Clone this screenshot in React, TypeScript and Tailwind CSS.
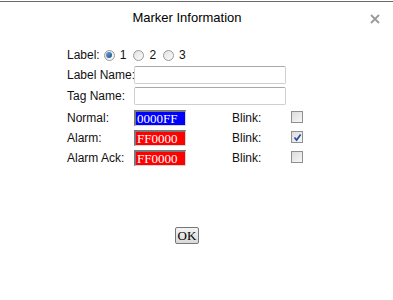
const sans = { fontFamily: '"Liberation Sans", Arial, sans-serif' }

function Radio({ checked }: { checked?: boolean }) {
  return (
    <span className="flex h-[11px] w-[11px] shrink-0 items-center justify-center rounded-full border border-[#9a9a9a] bg-gradient-to-br from-[#e2e2e2] to-[#fbfbfb]">
      {checked && (
        <span className="h-[6px] w-[6px] rounded-full bg-gradient-to-br from-[#6fa8da] to-[#174f8c]" />
      )}
    </span>
  )
}

function Checkbox({ checked }: { checked?: boolean }) {
  return (
    <span className="flex h-[12px] w-[12px] items-center justify-center border border-[#8e8f8f] bg-gradient-to-br from-[#dcdcdc] to-[#f7f7f7]">
      {checked && (
        <svg width="9" height="9" viewBox="0 0 9 9">
          <path d="M1.5 4.5 L3.6 7 L7.6 1.5" fill="none" stroke="#2a4d9a" strokeWidth="1.7" />
        </svg>
      )}
    </span>
  )
}

function ColorBox({ value, bg }: { value: string; bg: string }) {
  return (
    <div
      className={`flex h-[16px] w-[52px] items-center border-l-2 border-t-2 border-r border-b border-l-[#7a7a7a] border-t-[#7a7a7a] border-r-[#d8d8d8] border-b-[#d8d8d8] pl-px text-[13px] leading-none text-white ${bg}`}
      style={{ fontFamily: '"Liberation Serif", "Times New Roman", serif' }}
    >
      {value}
    </div>
  )
}

const colorRows = [
  { label: 'Normal:', value: '0000FF', bg: 'bg-[#0000ff]', blink: false },
  { label: 'Alarm:', value: 'FF0000', bg: 'bg-[#ff0000]', blink: true },
  { label: 'Alarm Ack:', value: 'FF0000', bg: 'bg-[#ff0000]', blink: false },
]

export default function App() {
  return (
    <div className="h-[300px] w-[393px] bg-white pt-px text-[12px] text-[#111]" style={sans}>
      <div className="border-t border-[#6a6a6a]" />
      <div className="relative flex h-[32px] items-center justify-center">
        <span className="mr-[19px] text-[13px] text-black">Marker Information</span>
        <span className="absolute right-[13px] top-[12px]">
          <svg width="10" height="10" viewBox="0 0 10 10">
            <path d="M1 1 L9 9 M9 1 L1 9" stroke="#9a9a9a" strokeWidth="1.8" />
          </svg>
        </span>
      </div>

      <div className="mt-[12px] flex flex-col pl-[67px]">
        <div className="flex h-[18px] items-center">
          <span>Label:</span>
          <span className="ml-[4px]"><Radio checked /></span>
          <span className="ml-[5px]">1</span>
          <span className="ml-[7px]"><Radio /></span>
          <span className="ml-[5px]">2</span>
          <span className="ml-[7px]"><Radio /></span>
          <span className="ml-[5px]">3</span>
        </div>

        <div className="mt-[2px] flex h-[18px] items-center">
          <span className="w-[67px] whitespace-nowrap">Label Name:</span>
          <div className="h-[18px] w-[152px] rounded-[2px] border border-[#cfcfcf] border-t-[#a9a9a9]" />
        </div>
        <div className="mt-[3px] flex h-[18px] items-center">
          <span className="w-[67px] whitespace-nowrap">Tag Name:</span>
          <div className="h-[18px] w-[152px] rounded-[2px] border border-[#cfcfcf] border-t-[#a9a9a9]" />
        </div>

        <div className="mt-[5px] flex flex-col gap-[4px]">
          {colorRows.map((row) => (
            <div key={row.label} className="flex h-[16px] items-center">
              <span className="w-[67px] whitespace-nowrap">{row.label}</span>
              <ColorBox value={row.value} bg={row.bg} />
              <span className="ml-[46px] w-[59px]">Blink:</span>
              <span className="-mt-[2px]"><Checkbox checked={row.blink} /></span>
            </div>
          ))}
        </div>
      </div>

      <div className="mt-[61px] pl-[175px]">
        <button
          className="flex h-[17px] w-[24px] items-center justify-center rounded-[2px] border border-[#777] bg-gradient-to-b from-[#f4f4f4] to-[#d9d9d9] text-[13px] font-normal leading-none text-black"
          style={{ fontFamily: '"Liberation Serif", "Times New Roman", serif' }}
        >
          OK
        </button>
      </div>
    </div>
  )
}
